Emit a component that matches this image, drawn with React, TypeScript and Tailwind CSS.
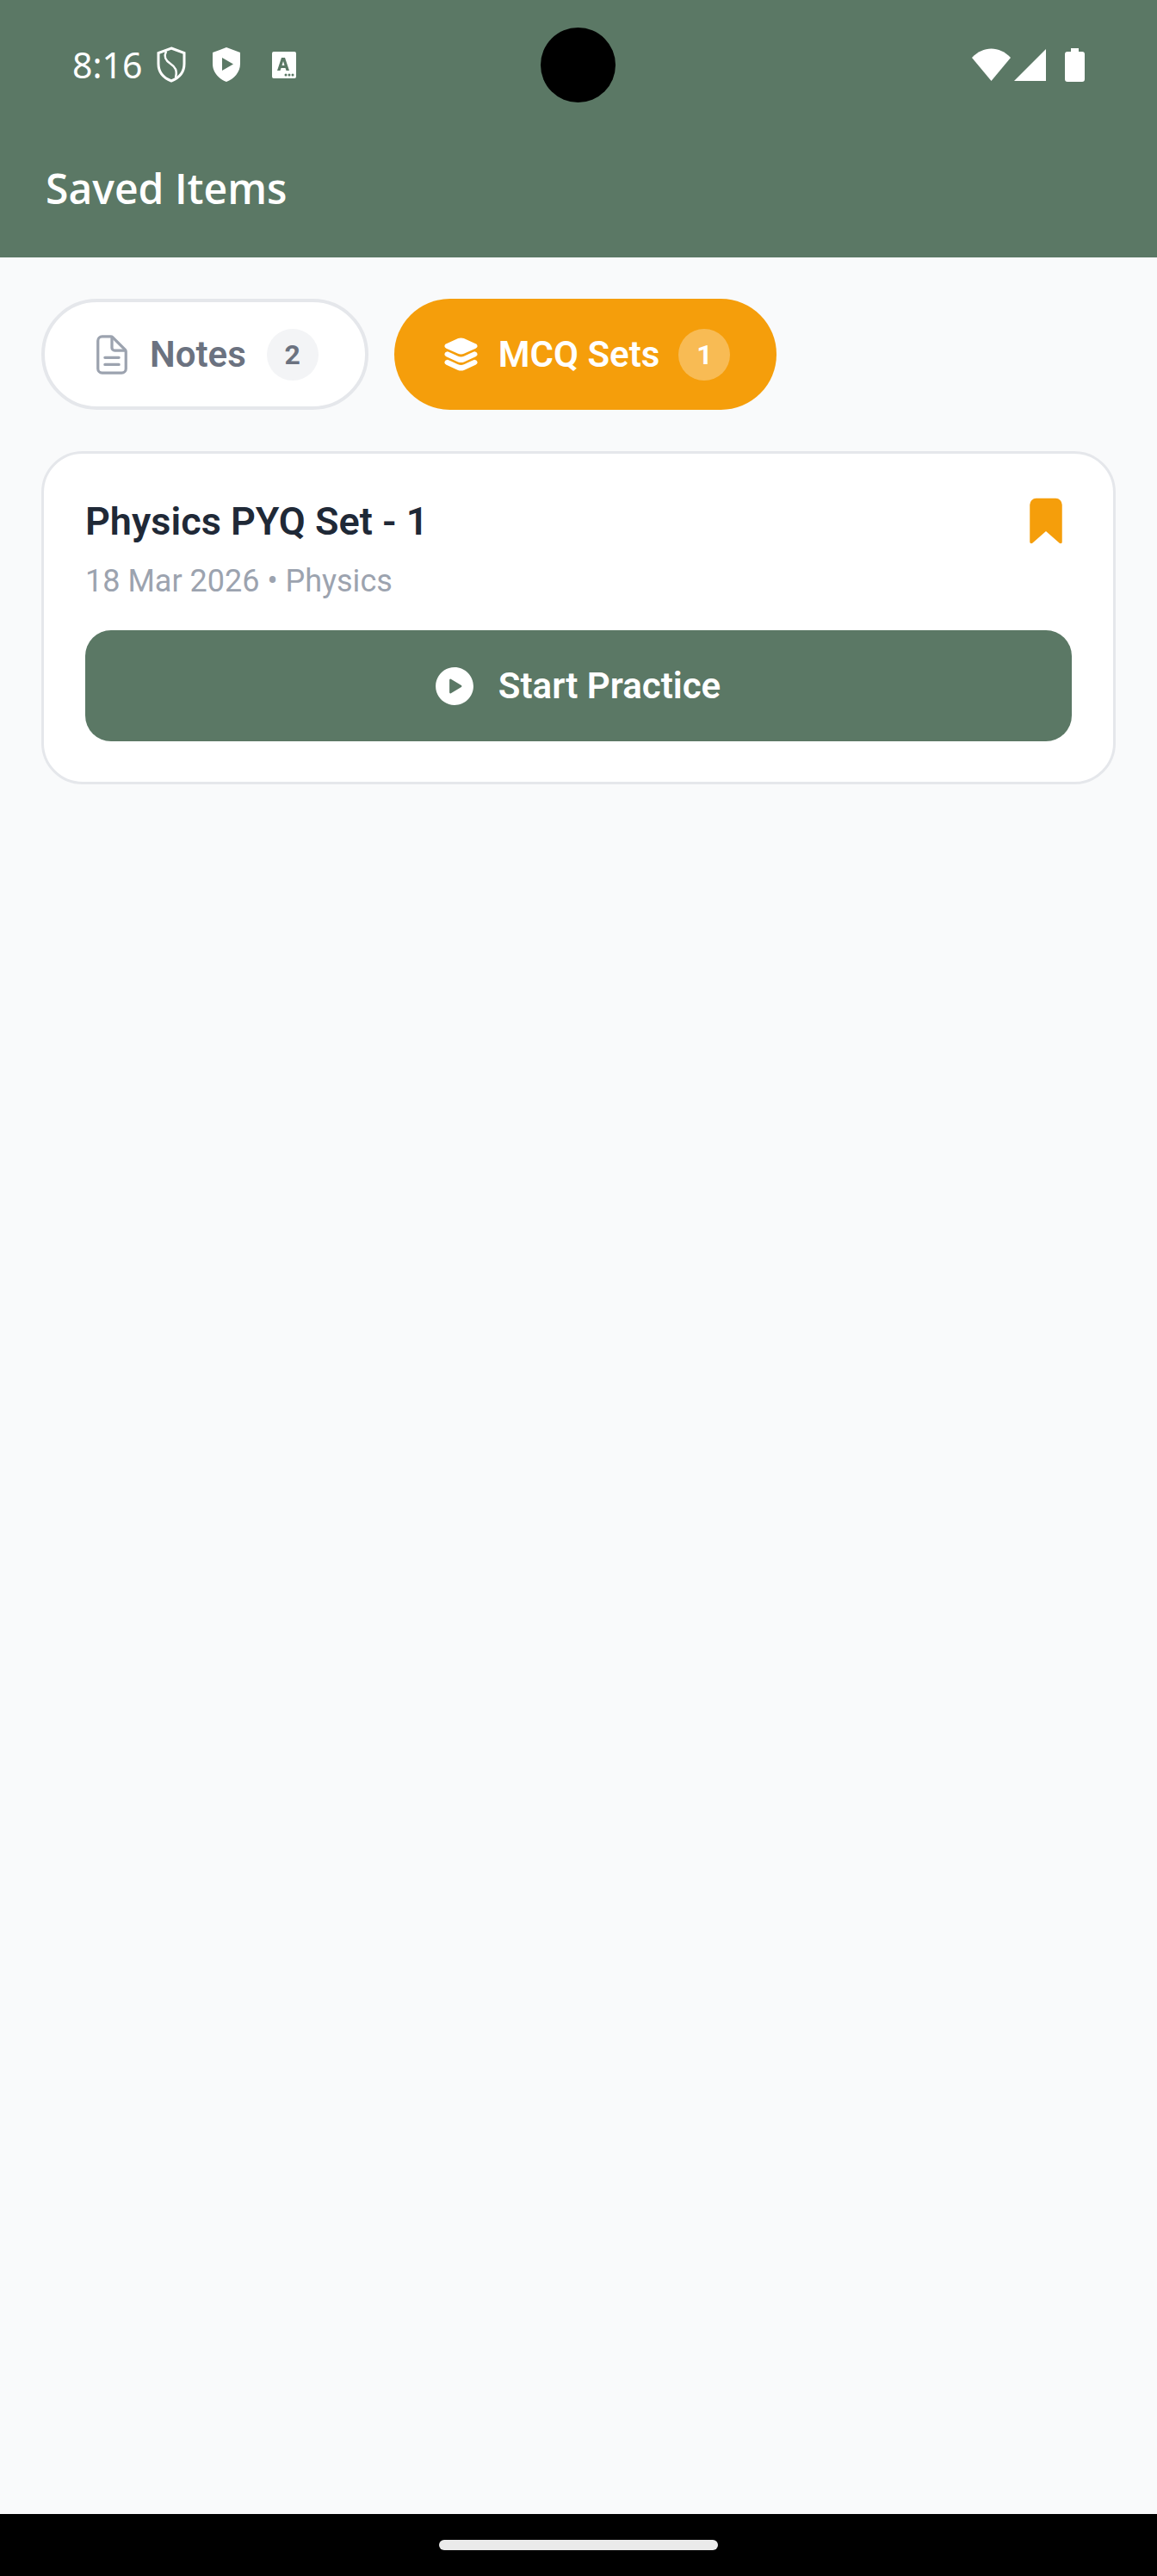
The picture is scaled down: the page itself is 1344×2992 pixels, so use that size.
import React from 'react';
import { IoBookmark, IoDocumentTextOutline, IoLayers, IoPlayCircle } from 'react-icons/io5';

const StatusIcons: React.FC = () => (
  <div className="flex items-center">
    <svg className="ml-[17px]" width="34" height="42" viewBox="0 0 34 42" fill="none" stroke="white" strokeWidth="3">
      <path d="M17 2 L32 7.500 V20 C32 29.500 26 36.500 17 40 C8 36.500 2 29.500 2 20 V7.500 Z" />
      <path d="M11 5.500 C8 12 10 16 16 20 C22 24 24 28 22 36" strokeWidth="2.500" />
    </svg>
    <svg className="ml-[30px]" width="34" height="42" viewBox="0 0 34 42" fill="white">
      <path fillRule="evenodd" d="M17 1 L33 7 V20 C33 30 26 37.500 17 41 C8 37.500 1 30 1 20 V7 Z M12 13 V28 L25 20.500 Z" />
    </svg>
    <svg className="ml-[36px]" width="28" height="31" viewBox="0 0 28 31" fill="white">
      <path fillRule="evenodd" d="M2 0 H26 A2 2 0 0 1 28 2 V29 A2 2 0 0 1 26 31 H2 A2 2 0 0 1 0 29 V2 A2 2 0 0 1 2 0 Z M11 7 L6 22 H9.500 L10.500 19 H15.500 L16.500 22 H20 L15 7 Z M11.500 16 L13 11 L14.500 16 Z" />
      <circle cx="16" cy="27" r="1.500" fill="#5B7865" />
      <circle cx="20" cy="27" r="1.500" fill="#5B7865" />
      <circle cx="24" cy="27" r="1.500" fill="#5B7865" />
    </svg>
  </div>
);

const SystemIcons: React.FC = () => (
  <div className="flex items-center">
    <svg width="45" height="38" viewBox="0 0 45 38" fill="white">
      <path d="M0 11 C13 -3 32 -3 45 11 L22.500 38 Z" />
    </svg>
    <svg className="ml-[4px]" width="37" height="37" viewBox="0 0 37 37" fill="white">
      <path d="M37 0 V37 H0 Z" />
    </svg>
    <svg className="ml-[22px]" width="23" height="39" viewBox="0 0 23 39" fill="white">
      <path d="M7 0 H16 V4 H20 A3 3 0 0 1 23 7 V36 A3 3 0 0 1 20 39 H3 A3 3 0 0 1 0 36 V7 A3 3 0 0 1 3 4 H7 Z" />
    </svg>
  </div>
);

const App: React.FC = () => {
  return (
    <div className="relative flex h-[2992px] flex-col bg-[#F9FAFB] font-['Roboto',sans-serif]">
      <div className="h-[299px] bg-[#5B7865] text-white">
        <div className="flex items-center justify-between pl-[84px] pr-[84px] pt-[54px]">
          <div className="flex h-[42px] items-center">
            <span className="text-[41px] leading-none font-['Noto_Sans',sans-serif]">8:16</span>
            <StatusIcons />
          </div>
          <SystemIcons />
        </div>
        <div className="mt-[92px] pl-[53px] text-[48px] leading-[62px] font-semibold font-['Open_Sans',sans-serif]">
          Saved Items
        </div>
      </div>

      {/* camera cutout */}
      <div className="absolute left-[628px] top-[32px] h-[87px] w-[87px] rounded-full bg-black" />

      <div className="flex-1 px-[48px] pt-[48px]">
        <div className="flex gap-[30px]">
          <button className="flex h-[129px] items-center rounded-full border-4 border-[#E5E7EB] bg-white pl-[52px] pr-[54px]">
            <IoDocumentTextOutline size={52} color="#9CA3AF" />
            <span className="ml-[18px] text-[42px] font-semibold text-[#6B7280]">Notes</span>
            <span className="ml-[24px] flex h-[60px] w-[60px] items-center justify-center rounded-full bg-[#F3F4F6] text-[32px] font-bold text-[#6B7280]">
              2
            </span>
          </button>
          <button className="flex h-[129px] items-center rounded-full bg-[#F59E0B] pl-[54px] pr-[54px]">
            <IoLayers size={47} color="white" />
            <span className="ml-[20px] text-[42px] font-semibold text-white">MCQ Sets</span>
            <span className="ml-[22px] flex h-[60px] w-[60px] items-center justify-center rounded-full bg-white/30 text-[32px] font-bold text-white">
              1
            </span>
          </button>
        </div>

        <div className="mt-[48px] rounded-[48px] border-[3px] border-[#E5E7EB] bg-white px-[48px] pt-[48px] pb-[47px]">
          <div className="flex items-start justify-between">
            <div>
              <div className="text-[45px] leading-[62px] font-semibold text-[#1F2937]">Physics PYQ Set - 1</div>
              <div className="mt-[13px] text-[36px] leading-[50px] text-[#9CA3AF]">18 Mar 2026 • Physics</div>
            </div>
            <IoBookmark size={60} color="#F59E0B" />
          </div>
          <button className="mt-[32px] flex h-[129px] w-full items-center justify-center rounded-[30px] bg-[#5B7865] pr-[6px]">
            <IoPlayCircle size={54} color="white" />
            <span className="ml-[24px] text-[42px] font-semibold text-white">Start Practice</span>
          </button>
        </div>
      </div>

      <div className="flex h-[72px] items-start justify-center bg-black pt-[30px]">
        <div className="h-[12px] w-[324px] rounded-full bg-[#EAEAEA]" />
      </div>
    </div>
  );
};

export default App;
